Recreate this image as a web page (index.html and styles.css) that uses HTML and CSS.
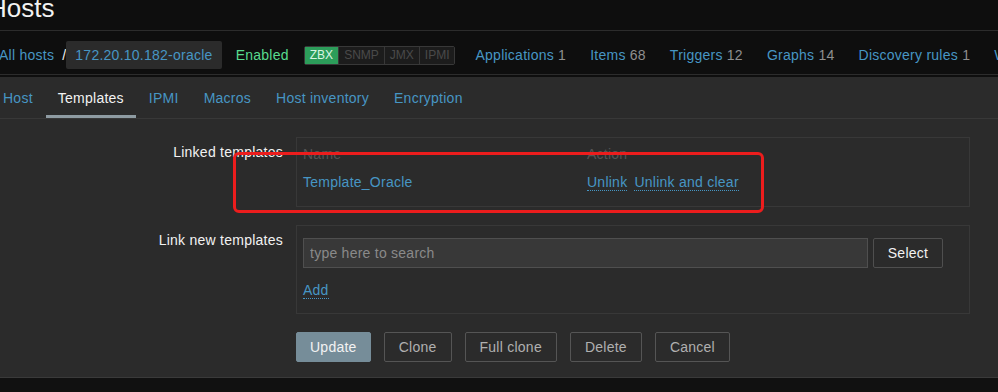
FILE: index.html
```html
<!DOCTYPE html>
<html lang="en">
<head>
<meta charset="utf-8">
<title>Hosts</title>
<link rel="stylesheet" href="styles.css">
</head>
<body>
<header class="page-header">
  <div class="title-bar"><h1 class="title">Hosts</h1></div>
  <nav class="host-nav">
    <a class="crumb">All hosts</a><span class="sep">/</span><a class="host-box">172.20.10.182-oracle</a>
    <span class="status-enabled">Enabled</span>
    <span class="avail"><span class="av on">ZBX</span><span class="av">SNMP</span><span class="av">JMX</span><span class="av">IPMI</span></span>
    <a class="nav-link first">Applications <span class="count">1</span></a>
    <a class="nav-link">Items <span class="count">68</span></a>
    <a class="nav-link">Triggers <span class="count">12</span></a>
    <a class="nav-link">Graphs <span class="count">14</span></a>
    <a class="nav-link">Discovery rules <span class="count">1</span></a>
    <a class="nav-link">Web scenarios</a>
  </nav>
</header>
<main class="content">
  <ul class="tabs">
    <li><a class="tab">Host</a></li>
    <li><a class="tab active">Templates</a></li>
    <li><a class="tab">IPMI</a></li>
    <li><a class="tab">Macros</a></li>
    <li><a class="tab">Host inventory</a></li>
    <li><a class="tab">Encryption</a></li>
  </ul>
  <div class="form">
    <div class="form-row">
      <label class="form-label">Linked templates</label>
      <div class="field-box linked">
        <div class="tpl-row head"><span>Name</span><span>Action</span></div>
        <div class="tpl-row"><a class="link">Template_Oracle</a><span class="actions"><a class="link dotted">Unlink</a><a class="link dotted">Unlink and clear</a></span></div>
      </div>
    </div>
    <div class="form-row">
      <label class="form-label">Link new templates</label>
      <div class="field-box newlink">
        <div class="search-row">
          <input class="search" type="text" placeholder="type here to search">
          <button class="btn-select" type="button">Select</button>
        </div>
        <div class="add-row"><a class="link dotted">Add</a></div>
      </div>
    </div>
    <div class="form-actions">
      <button class="btn primary" type="button">Update</button>
      <button class="btn" type="button">Clone</button>
      <button class="btn" type="button">Full clone</button>
      <button class="btn" type="button">Delete</button>
      <button class="btn" type="button">Cancel</button>
    </div>
  </div>
  <div class="annotation"></div>
</main>
<footer class="page-footer"></footer>
</body>
</html>
```

FILE: styles.css
```css
* { box-sizing: border-box; }

body {
  margin: 0;
  width: 998px;
  height: 392px;
  overflow: hidden;
  background: #0e0e0e;
  font-family: "Liberation Sans", Arial, sans-serif;
  font-size: 14px;
  letter-spacing: 0.25px;
  color: #f2f2f2;
}

a { color: #4796c4; text-decoration: none; }

.page-header {
  background: #0e0e0e;
  padding-bottom: 2px;
}

.title-bar {
  height: 31px;
  border-bottom: 1px solid #2c2c2c;
  overflow: hidden;
}

.title {
  margin: -5px 0 0 -12px;
  font-size: 26px;
  line-height: 26px;
  font-weight: normal;
  letter-spacing: 0;
  color: #f2f2f2;
}

.host-nav {
  display: flex;
  align-items: center;
  height: 44px;
  padding: 10px 0 5px;
  border-bottom: 1px solid #2c2c2c;
  white-space: nowrap;
  overflow: hidden;
}

.crumb { margin-left: -1px; }

.sep {
  margin-left: 8px;
  color: #f2f2f2;
}

.host-box {
  height: 28px;
  line-height: 28px;
  padding: 0 9px;
  background: #2b2b2b;
  border-radius: 2px;
}

.status-enabled {
  margin-left: 14px;
  color: #59db8f;
}

.avail {
  display: flex;
  margin-left: 15px;
  border: 1px solid #383838;
  border-radius: 2px;
  font-size: 12px;
  line-height: 17px;
  letter-spacing: 0;
}

.av {
  padding: 0 5px;
  color: #4a4a4a;
  background: #1c1c1c;
  border-left: 1px solid #383838;
}

.av.on {
  border-left: 0;
  background: #2c9d5a;
  color: #d8f5e2;
}

.nav-link { margin-left: 24px; }
.nav-link.first { margin-left: 20px; }

.count { color: #8f8f8f; }

.content {
  position: relative;
  height: 300px;
  background: #2b2b2b;
}

.tabs {
  display: flex;
  gap: 1px;
  list-style: none;
  margin: 0;
  padding: 0;
  border-bottom: 1px solid #383838;
}

.tabs li:first-child { margin-left: -9px; }

.tab {
  display: block;
  padding: 13px 12px 9px;
  line-height: 16px;
  border-bottom: 3px solid transparent;
}

.tab.active {
  color: #f2f2f2;
  border-bottom-color: #8e9ba2;
}

.form { padding-top: 18px; }

.form-row {
  display: grid;
  grid-template-columns: 283px 674px;
  column-gap: 13px;
  margin-bottom: 18px;
}

.form-label {
  text-align: right;
  padding-top: 7px;
  line-height: 16px;
  color: #f2f2f2;
}

.field-box {
  border: 1px solid #383838;
  padding: 8px 6px 15px;
}

.tpl-row {
  display: grid;
  grid-template-columns: 284px auto;
  line-height: 16px;
}

.tpl-row.head {
  color: #555555;
  margin-bottom: 12px;
}

.actions {
  display: flex;
  gap: 7px;
}

.dotted { border-bottom: 1px dotted #4796c4; }

.field-box.newlink { padding: 12px 6px 15px; }

.search-row {
  display: flex;
  gap: 5px;
}

.search {
  width: 565px;
  height: 30px;
  margin: 0;
  padding: 0 6px;
  background: #383838;
  border: 1px solid #4f4f4f;
  border-radius: 0;
  color: #f2f2f2;
  font-family: inherit;
  font-size: 14px;
  letter-spacing: inherit;
}

.search::placeholder { color: #8a8a8a; }

.btn-select {
  width: 70px;
  height: 30px;
  margin: 0;
  padding: 0;
  background: #2b2b2b;
  border: 1px solid #4f4f4f;
  border-radius: 2px;
  color: #f2f2f2;
  font-family: inherit;
  font-size: 14px;
  letter-spacing: inherit;
}

.add-row {
  margin-top: 14px;
  height: 16px;
  line-height: 16px;
}

.form-actions {
  display: flex;
  gap: 13px;
  padding-left: 296px;
  margin-top: 1px;
}

.btn {
  height: 30px;
  margin: 0;
  padding: 0 14px;
  background: transparent;
  border: 1px solid #555555;
  border-radius: 2px;
  color: #b0b0b0;
  font-family: inherit;
  font-size: 14px;
  letter-spacing: inherit;
}

.btn.primary {
  padding: 0 13px;
  background: #768d99;
  border-color: #768d99;
  color: #f2f2f2;
}

.annotation {
  position: absolute;
  left: 233px;
  top: 75px;
  width: 531px;
  height: 61px;
  border: 3px solid #ec1d1d;
  border-radius: 6px;
}

.page-footer {
  height: 15px;
  border-top: 1px solid #3a3a3a;
  background: #111111;
}
```
